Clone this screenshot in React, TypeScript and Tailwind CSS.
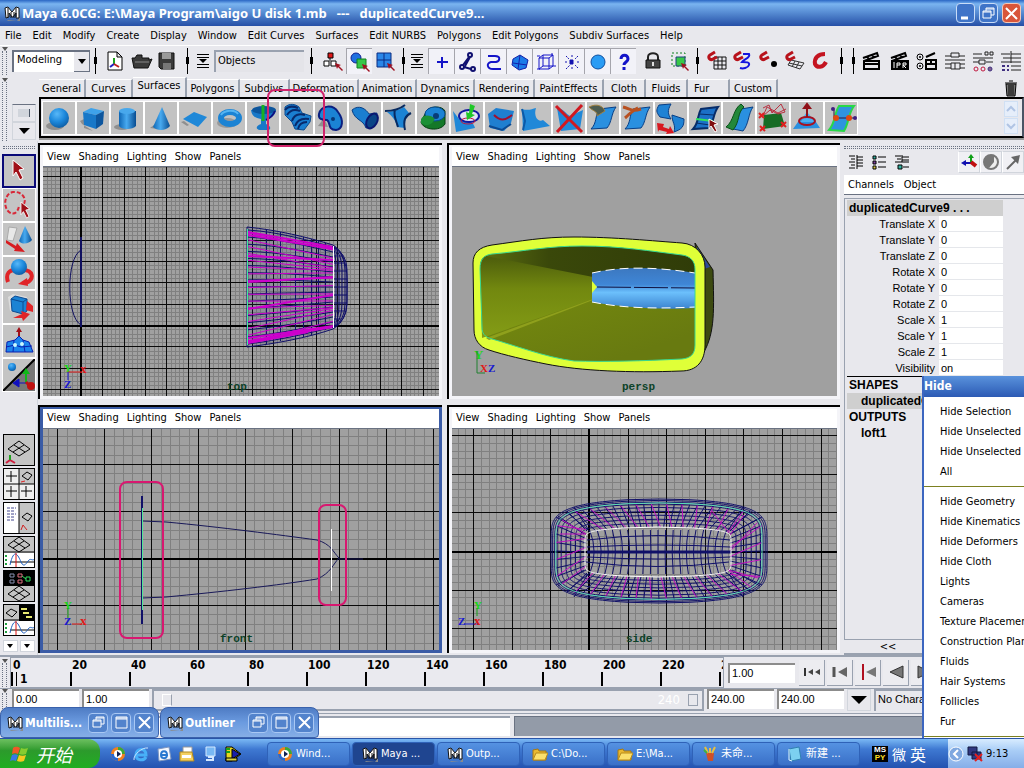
import { Fragment, useState } from 'react';
import type { ReactNode } from 'react';

type Pt = [number, number];

const menus = ['File', 'Edit', 'Modify', 'Create', 'Display', 'Window', 'Edit Curves', 'Surfaces', 'Edit NURBS', 'Polygons', 'Edit Polygons', 'Subdiv Surfaces', 'Help'];

const tabs = [
  { name: 'General', width: 'w-[47px]' },
  { name: 'Curves', width: 'w-[47px]' },
  { name: 'Surfaces', width: 'w-[54px]' },
  { name: 'Polygons', width: 'w-[53px]' },
  { name: 'Subdivs', width: 'w-[50px]' },
  { name: 'Deformation', width: 'w-[69px]' },
  { name: 'Animation', width: 'w-[58px]' },
  { name: 'Dynamics', width: 'w-[58px]' },
  { name: 'Rendering', width: 'w-[60px]' },
  { name: 'PaintEffects', width: 'w-[69px]' },
  { name: 'Cloth', width: 'w-[42px]' },
  { name: 'Fluids', width: 'w-[42px]' },
  { name: 'Fur', width: 'w-[42px] pl-1.5 text-left' },
  { name: 'Custom', width: 'w-[48px]' },
];

const channels = [
  ['Translate X', '0'], ['Translate Y', '0'], ['Translate Z', '0'],
  ['Rotate X', '0'], ['Rotate Y', '0'], ['Rotate Z', '0'],
  ['Scale X', '1'], ['Scale Y', '1'], ['Scale Z', '1'], ['Visibility', 'on'],
];

const hideTop = ['Hide Selection', 'Hide Unselected Objects', 'Hide Unselected CVs', 'All'];
const hideItems = ['Hide Geometry', 'Hide Kinematics', 'Hide Deformers', 'Hide Cloth', 'Lights', 'Cameras', 'Texture Placements', 'Construction Planes', 'Fluids', 'Hair Systems', 'Follicles', 'Fur'];

/* ---------- small pieces ---------- */

function Svg({ s = 24, children }: { s?: number; children: ReactNode }) {
  return (
    <svg width={s} height={s} viewBox={`0 0 ${s} ${s}`} fill="none" className="block shrink-0">
      {children}
    </svg>
  );
}

function MayaLogo() {
  return (
    <svg width="18" height="18" viewBox="0 0 18 18" className="block shrink-0">
      <path d="M4 16l10 1 3-4v4H5z" fill="#8b8b8b" />
      <path d="M2 4l3-1 4 5 4-5 3 1v10h-3V9l-3 4H9L6 9v4l-3 1z" fill="#fff" stroke="#111" strokeWidth="1" />
      <path d="M5 4v9M8 8v6M11 8v6M13 4v9" stroke="#111" strokeWidth="1" />
    </svg>
  );
}

function Sep({ wide = 'w-4' }: { wide?: string }) {
  return (
    <div className={`${wide} flex h-7 shrink-0 items-center justify-center`}>
      <svg width="6" height="26" className="block">
        <path d="M2 0h1v26H2z" fill="#000" />
        <path d="M1 9h3v7H1z" fill="#000" />
      </svg>
    </div>
  );
}

function Handle({ className = '' }: { className?: string }) {
  return (
    <div className={`flex w-[9px] shrink-0 flex-col items-center ${className}`}>
      <svg width="6" height="4" className="block shrink-0"><path d="M0 0h6L3 4z" fill="#555" /></svg>
      <div className="w-[5px] flex-1 border-x border-dotted border-gray-500" />
    </div>
  );
}

function ToolBtn({ label, on = false, children }: { label: string; on?: boolean; children: ReactNode }) {
  return (
    <button
      aria-label={label}
      className={`flex h-[26px] w-[26px] shrink-0 items-center justify-center ${on ? 'border-l border-t border-[#a5a5ac] bg-[#f2f2f8]' : ''}`}
    >
      {children}
    </button>
  );
}

const redArrow = <path d="M14 14l6 2-2 1 4 4-1 1-4-4-1 2z" fill="#a01020" />;
const magnet = <path d="M10 3L5 6c-3 2 0 6 3 4l4-2" stroke="#b8121b" strokeWidth="3" />;
const listIcon = (
  <Svg s={14}>
    <path d="M1 0h12v1H1zM1 3h12v1H1zM1 10h12v1H1zM1 13h12v1H1z" fill="#000" />
    <path d="M3 5h8L7 9z" fill="#000" />
  </Svg>
);

const maskIcons: [string, ReactNode][] = [
  ['Select handles', <path d="M12 7v11M7 12h11" stroke="#1414c8" strokeWidth="2" />],
  ['Select joints', <g stroke="#101070" strokeWidth="2"><circle cx="14" cy="5" r="2" /><circle cx="6" cy="17" r="2" /><circle cx="17" cy="19" r="2" /><path d="M13 7l-6 8M8 17l7 2M14 7l-5 9" /></g>],
  ['Select curves', <path d="M6 6h7c6 0 5 5 1 6H9c-5 1-4 7 2 7h8" stroke="#1414c8" strokeWidth="2" />],
  ['Select surfaces', <g><path d="M5 9l7-4 8 5-2 8-7 2-7-5z" fill="#1c7be8" stroke="#1420a8" /><path d="M5 13l14 2M12 5l-2 14" stroke="#1420a8" /></g>],
  ['Select deformations', <g stroke="#1414c8"><path d="M5 8h10v11H5zM9 5h10v11H9z" /><path d="M3 6h3M18 3v3M3 19h3M19 16h3M5 8l4-3M15 8l4-3M5 19l4-3M15 19l4-3" /></g>],
  ['Select dynamics', <g stroke="#1414b0"><path d="M6 6l3 3M12 5v3M18 6l-3 3M6 19l4-4M18 18l-3-3M5 12h3M17 12h3M12 17v3" strokeDasharray="2 1" /><path d="M10 10h3v4h-3z" fill="#1414b0" /></g>],
  ['Select rendering', <circle cx="12" cy="12" r="7" fill="#2a9cf4" stroke="#0d4ea0" />],
  ['Select miscellaneous', <path d="M9 9c0-5 7-5 7 0 0 3-4 3-4 6M12 17v3" stroke="#1414c8" strokeWidth="3" />],
];

const snapIcons: [string, ReactNode][] = [
  ['Snap to grids', <g><path d="M9 8h12v12H9zM13 8v12M17 8v12M9 12h12M9 16h12" stroke="#111" />{magnet}</g>],
  ['Snap to curves', <g><path d="M12 5h6c2 4-5 5-7 8 4 0 8 0 7 3s-6 4-9 3" stroke="#1414e0" strokeWidth="2" />{magnet}</g>],
  ['Snap to points', <g>{magnet}<circle cx="17" cy="15" r="3" fill="#000" /></g>],
  ['Snap to view planes', <g><path d="M8 11l13 3-4 6-12-4zM12 12l-3 6M16 13l-3 6M6 14l13 3" stroke="#333" />{magnet}</g>],
  ['Make live', <path d="M16 5c-7 0-11 4-10 10 2 4 8 4 11-2" stroke="#c41420" strokeWidth="4" />],
];

const clapper = <path d="M4 9l14-5 1 3L5 12v8h15v-8H5M6 15h14M8 8l2 2M13 6l2 2" stroke="#000" strokeWidth="2" />;

const boxIcons = (
  <>
    <ToolBtn label="Attribute editor">
      <Svg><path d="M2 7h6M8 4h8v4H8zM16 7h6M2 11h20M2 15h6M8 14h9v6H8zM17 15h5M2 19h6M17 19h5M12 14v6" stroke="#222" /></Svg>
    </ToolBtn>
    <ToolBtn label="Tool settings">
      <Svg><path d="M2 5h9M14 3h3v3h-3zM19 3h3v3h-3zM2 9h20M2 13h6M8 11h6v4H8zM15 13h7" stroke="#222" /><g stroke="#c01840"><circle cx="5" cy="20" r="2" /><circle cx="12" cy="20" r="2" /></g><circle cx="19" cy="20" r="2" stroke="#403080" fill="#806090" /></Svg>
    </ToolBtn>
    <ToolBtn label="Channel box">
      <Svg><path d="M2 5h9M12 2v12M12 5h10M4 9h8M12 9h10M2 13h20M12 17h10M12 21h10" stroke="#222" /><path d="M3 16h3v2H3zM8 16h2v2H8zM3 20h3v2H3zM8 20h2v2H8z" fill="#403080" /></Svg>
    </ToolBtn>
  </>
);

/* ---------- shelf icons, 32x32 ---------- */

const sheet = 'M4 27c6-6 4-13 8-20l17-2c-5 7-4 15-9 21z';

const shelf: [string, ReactNode][] = [
  ['Sphere', <g><ellipse cx="12" cy="24" rx="9" ry="4" fill="#8f8f8f" /><circle cx="16" cy="16" r="10" fill="url(#ball)" /></g>],
  ['Cube', <g><path d="M5 22l-2-3 4-2v9l9 3z" fill="#8f8f8f" /><path d="M6 10l8-4 13 3-8 4z" fill="#3ea2ea" /><path d="M6 10l13 3v14L7 23z" fill="#1878c8" /><path d="M19 13l8-4-1 13-7 5z" fill="#0d569e" /></g>],
  ['Cylinder', <g><ellipse cx="11" cy="25" rx="8" ry="3" fill="#8f8f8f" /><path d="M8 9v15c2 4 14 4 17 0V9z" fill="url(#tube)" /><ellipse cx="16" cy="9" rx="8" ry="3" fill="#48a8ec" /></g>],
  ['Cone', <g><path d="M5 26l8-6v7z" fill="#8f8f8f" /><path d="M17 5L8 25c4 4 13 4 17-1z" fill="url(#tube)" /></g>],
  ['Plane', <g><path d="M5 19l5 4-2 1-6-4z" fill="#8f8f8f" /><path d="M4 17l11-7 13 5-9 10z" fill="#1f88d8" /></g>],
  ['Torus', <g><ellipse cx="14" cy="21" rx="10" ry="5" fill="#999" /><ellipse cx="17" cy="16" rx="9" ry="6" stroke="#1b83d4" strokeWidth="6" /><path d="M8 13c3-5 14-6 17-1" stroke="#55b4f2" strokeWidth="2" /></g>],
  ['Revolve', <g><path d="M4 8c1 7 5 8 10 9v5c-5 2-6 5-1 6h9c3-2 0-5-3-6v-5c5-1 9-3 10-9z" fill="#1878c8" /><ellipse cx="17" cy="8" rx="12" ry="4" fill="#0d559c" /><path d="M16 3v16" stroke="#18b020" strokeWidth="3" /><path d="M28 9c-2 5-5 7-9 9" stroke="#101080" strokeWidth="2" /></g>],
  ['Loft', <g><path d="M4 5c5-4 10-3 14 0l3 6 9 3-1 6-6 8-9-1-3-7-7-7z" fill="#1a7ed0" stroke="#0b4b90" /><path d="M4 8c3-4 8-4 13-2M6 13c3-5 8-6 13-4M11 19c2-6 7-8 13-6M14 24c2-6 7-8 14-7M17 27c1-5 5-7 9-7" stroke="#082a6c" strokeWidth="2" /></g>],
  ['Planar', <g><path d="M3 24l6-8 4 9z" fill="#8f8f8f" /><path d="M4 12C6 3 18 2 23 10c6 8 5 17-2 18-9 0-5-8-9-10-5 0-9-1-8-6z" fill="#1b83d4" stroke="#0a1f80" strokeWidth="2" /><circle cx="18" cy="17" r="2" fill="#083878" /></g>],
  ['Extrude', <g><path d="M3 8c7-6 14-1 17 4l8-1c0 11-4 15-11 15-3-9-11-7-14-18z" fill="#1a7ed0" stroke="#083f86" /><ellipse cx="23" cy="19" rx="5" ry="8" transform="rotate(30 23 19)" fill="#0a4486" stroke="#0a1870" strokeWidth="2" /></g>],
  ['Birail', <g><path d="M4 10c7-1 12-2 17-5l5 6c-4 5-4 9-4 15l-8-1c-1-7-5-11-10-15z" fill="#1b83d4" /><path d="M2 9c9 0 15-2 20-6M22 28c-2-10 0-14 6-17M12 8c-2 5 1 10 3 17" stroke="#082a60" strokeWidth="2" /></g>],
  ['Boundary', <g><path d="M4 20c2 8 19 10 24 2V9c-3-6-17-5-19 1z" fill="#147828" stroke="#053c10" /><ellipse cx="18" cy="12" rx="10" ry="7" fill="#1b83d4" stroke="#094a90" /><path d="M4 17c4-6 10-3 14-1-2 7-9 9-14 5z" fill="#1b9035" /><circle cx="19" cy="14" r="3" fill="#083c78" /></g>],
  ['Project curve', <g><path d="M2 9l6 8c8 0 15 3 16 9L5 30z" fill="#1f88d8" /><ellipse cx="18" cy="14" rx="10" ry="6" stroke="#1018a0" strokeWidth="2" fill="#e4e4f4" /><ellipse cx="17" cy="19" rx="7" ry="3" stroke="#c01840" /><path d="M19 2l5 2-3 8 3 1-8 5-1-8 3 1z" fill="#20c828" /></g>],
  ['Trim', <g><path d="M3 12l8-6 18 3-3 12-7 8-14-3z" fill="#1f7fd0" /><path d="M9 13c6 6 11 6 18 0" stroke="#a01030" strokeWidth="2" /><path d="M4 24l13 4 9-6" stroke="#0b4a92" strokeWidth="2" /></g>],
  ['Untrim', <g><path d="M3 7c6 2 10 0 14-1-3 9 3 15 7 12l7 6-16 3-11 2z" fill="#2088d8" /><path d="M3 7l3 12-2 9" stroke="#0b5aa8" strokeWidth="2" /></g>],
  ['Remove trim', <g><path d="M4 6c6 0 9 6 13 8l13-6-3 19-19 2z" fill="#2088d8" /><path d="M3 4l26 26M29 3L4 30" stroke="#d01820" strokeWidth="3" /></g>],
  ['Fillet', <g><path d={sheet} fill="#2a90e0" stroke="#083f86" /><path d="M2 5c8-4 14-1 16 4l-8 5c1-5-5-5-8-9z" fill="#4c5b50" stroke="#a08040" /></g>],
  ['Detach surfaces', <g><path d={sheet} fill="#2a90e0" stroke="#083f86" /><path d="M2 5c8 2 9 5 18 2M4 16c5-4 6-7 13-10" stroke="#b85020" strokeWidth="3" /></g>],
  ['Attach surfaces', <g><path d="M4 3l12-1c-4 7-3 10 0 15L5 15C1 10 1 8 4 3z" fill="#1f82d4" stroke="#083f86" /><path d="M17 13l12 4c0 8-2 10-10 13 2-8-2-9-2-17z" fill="#1f82d4" stroke="#083f86" /><path d="M2 21l7 1-1 3 6 2 1-3 4 7-8 1 1-2-8-2-1 2z" fill="#d81820" /></g>],
  ['Insert isoparms', <g><path d={sheet} fill="#1b70c8" stroke="#082c68" strokeWidth="2" /><path d="M10 12l15 1M7 21l14 2" stroke="#082c68" /><path d="M7 17l17 2" stroke="#30e060" strokeWidth="2" /><path d="M20 17l9 5-4 1 3 6-2 1-4-6-2 3z" fill="#801010" stroke="#fff" /></g>],
  ['Extend surface', <g><path d="M10 27c5-8 3-13 8-20l12-2c-5 7-4 17-10 24z" fill="#2a90e0" stroke="#083f86" /><path d="M3 25c8-6 7-18 15-23l3 3c-7 6-4 15-11 23z" fill="#23883a" stroke="#0b5018" /></g>],
  ['Sculpt surface', <g><path d="M7 13l17-2 4 13-22 3z" fill="#166c24" /><path d="M6 6l6-3 3 8 9-9 4 8-7 2-8-4-7 6 4-9 11 6 8-4" stroke="#b83040" /><path d="M2 11l5 5m0-5l-5 5M3 24l5 5m0-5l-5 5M24 20l5 5m0-5l-5 5" stroke="#e02020" strokeWidth="2" /></g>],
  ['Surface editing', <g><path d="M2 27l7-10h14l6 9z" fill="#2a90e0" /><path d="M9 20c4-2 4-9 7-9s4 6 8 9z" fill="#4bb0f2" /><ellipse cx="16" cy="19" rx="8" ry="4" stroke="#a81020" strokeWidth="2" /><path d="M16 15V4M13 6l3-4 3 4z" stroke="#901018" fill="#901018" strokeWidth="2" /></g>],
  ['Stitch', <g><path d="M4 28c7-8 5-17 10-24h15c-6 8-5 17-10 25z" fill="#2f93df" stroke="#28d848" strokeWidth="2" /><path d="M9 16h20M9 16V8" stroke="#301040" /><circle cx="11" cy="16" r="3" fill="#e04810" /><circle cx="24" cy="16" r="3" fill="#e04810" /><circle cx="8" cy="7" r="2" fill="#402080" /><circle cx="30" cy="16" r="2" fill="#402080" /></g>],
];

/* ---------- tool box icons ---------- */

const cursor = 'M10 5l11 9-5 1 4 8-3 2-4-8-3 4z';

const tools: [string, ReactNode][] = [
  ['Select tool', <path d={cursor} fill="#a01018" stroke="#fff" />],
  ['Lasso tool', <g><path d="M21 15c3-6-3-13-11-12C1 5 0 18 6 23c5 4 9 0 10-6" stroke="#d82838" strokeWidth="2" strokeDasharray="4 2" /><path d={cursor} transform="translate(10 9) scale(0.8)" fill="#a01018" stroke="#fff" /></g>],
  ['Move tool', <g><path d="M6 4l8 1-4 13-6-1z" fill="#e8e8e8" stroke="#aaa" /><path d="M22 3l-6 15c3 4 10 3 13-1z" fill="url(#tube)" /><path d="M3 17l10 6 1-3 8 9-11-1 1-2-9-6z" fill="#d81c20" /></g>],
  ['Rotate tool', <g><path d="M5 25c-3-9 2-12 7-12M20 13c10 0 12 9 3 13" stroke="#e02428" strokeWidth="4" /><path d="M15 27l9-6 1 8z" fill="#e02428" /><circle cx="16" cy="10" r="8" fill="url(#ball)" /></g>],
  ['Scale tool', <g><path d="M5 6l5-3 14 3v15L7 20z" fill="#dcdcdc" /><path d="M8 8l4-3 12 3v12l-4 3-11-3z" fill="#1b83d4" stroke="#0b4a92" /><path d="M8 8l12 3 4-3M20 11v12" stroke="#0b4a92" /><path d="M24 10l6 5v6l-7-2M10 27l9-4-1-3 9 3-7 7-1-3z" fill="#e02428" /></g>],
  ['Soft modification', <g><path d="M16 2l3 5h-2v6h-2V7h-2z" fill="#a01018" /><path d="M4 17l8-2 4-4 4 4 6 2 4 10H3z" fill="#1c84ec" stroke="#0820b0" /><path d="M3 22l9-2 6 2 11-1M11 15l-1 12M20 15l2 12" stroke="#0820b0" /><circle cx="12" cy="20" r="2" fill="#c8f8ff" /><circle cx="19" cy="19" r="2" fill="#c8f8ff" /></g>],
  ['Show manipulator', <g><path d="M32 0v32H0z" fill="#777" /><path d="M0 32L32 0" stroke="#000" strokeWidth="2" /><circle cx="9" cy="8" r="4" fill="url(#ball)" /><path d="M23 24V14" stroke="#10b818" strokeWidth="2" /><path d="M19 15l4-6 4 6z" fill="#10b818" /><path d="M23 24H15M16 20v8l-6-4z" stroke="#1010c0" fill="#1010c0" /><path d="M23 23l4 4" stroke="#c01010" strokeWidth="3" /><circle cx="28" cy="27" r="4" fill="#c01010" /></g>],
];

const gridShape = 'M4 14l11-8 11 8-11 7zM10 10l11 7M20 10L9 17';
const graph = <g><path d="M0 16h32v16H0z" fill="#fff" /><path d="M6 25h26M0 15h32" stroke="#000" /><path d="M6 28c4-18 8-10 11-3s6 0 8-2 4 2 6-2" stroke="#2060c0" /><path d="M12 16v16" stroke="#e01010" /><path d="M2 18v12" stroke="#20a040" strokeDasharray="2 2" strokeWidth="2" /></g>;

const layouts: [string, ReactNode][] = [
  ['Single perspective view', <g><path d={gridShape} stroke="#000" /><path d="M6 25l-4 3M6 25l5 3" stroke="#d02040" strokeWidth="2" /><path d="M6 20v5" stroke="#20a020" strokeWidth="2" /></g>],
  ['Four view', <g><path d="M0 0h15v30H0zM15 15h15v15H15z" fill="#efefef" /><path d="M15 0v30M0 15h30M2 7h11M7 2v11M2 22h11M7 17v11M17 22h11M22 17v11" stroke="#000" /><path d="M18 7l5-4 5 3-4 5z" stroke="#000" /><path d="M17 13l4-1" stroke="#e02020" /></g>],
  ['Outliner and perspective', <g><path d="M0 0h15v30H0z" fill="#fff" /><path d="M15 0v30" stroke="#000" /><path d="M3 5h9M3 8h7M3 11h9M3 14h7M3 17h8" stroke="#444890" strokeDasharray="3 1" /><path d="M18 14l5-4 5 3-4 5z" stroke="#000" /><path d="M17 27l2-5 4 5" stroke="#d02020" /></g>],
  ['Perspective and graph', <g><path d={gridShape} transform="translate(0 -6)" stroke="#000" />{graph}</g>],
  ['Hypershade and perspective', <g><path d="M0 0h32v15H0z" fill="#000" /><path d="M6 3h4v3H6zM6 9h4v3H6z" stroke="#8890b0" /><path d="M14 3h4v3h-4zM14 9h4v3h-4z" stroke="#e07080" /><path d="M18 5l4 3M22 6h4v4h-4z" stroke="#30e060" /><path d={gridShape} transform="translate(0 9)" stroke="#000" /></g>],
  ['Perspective, hypergraph and graph', <g><path d="M15 0h16v16H15z" fill="#000" /><path d="M17 4h6M19 8h6M22 12h6" stroke="#e8e870" strokeWidth="2" /><path d="M2 8l5-4 6 3-5 5z" stroke="#000" />{graph}</g>],
];

/* ---------- viewport drawing ---------- */

interface GridProps {
  ox: number;
  oy: number;
  pitch: number;
  x0: number;
  y0: number;
  w?: number;
  h?: number;
}

// ox/oy is where the two world axes cross
function Grid({ ox, oy, pitch, x0, y0, w = 1400, h = 900 }: GridProps) {
  const step = pitch / 5;
  let minor = '';
  let major = '';
  for (let i = Math.ceil((x0 - ox) / step); ox + i * step < x0 + w; i++) {
    const seg = `M${Math.round(ox + i * step)}.5 ${y0}v${h}`;
    if (i % 5 === 0) major += seg;
    else minor += seg;
  }
  for (let i = Math.ceil((y0 - oy) / step); oy + i * step < y0 + h; i++) {
    const seg = `M${x0} ${Math.round(oy + i * step)}.5h${w}`;
    if (i % 5 === 0) major += seg;
    else minor += seg;
  }
  return (
    <g shapeRendering="crispEdges">
      <path d={minor} stroke="#808080" />
      <path d={major} stroke="#0a0a0a" />
    </g>
  );
}

function Label({ x, y, children }: { x: number; y: number; children: string }) {
  return <text x={x} y={y} className="fill-[#0c4228] font-['Liberation_Mono',monospace] text-[11px] font-bold">{children}</text>;
}

function Axis({ x, y, size = 11, fill, children }: { x: number; y: number; size?: number; fill: string; children: string }) {
  return <text x={x} y={y} fontSize={size} fill={fill} className="font-['Liberation_Serif',serif] font-bold">{children}</text>;
}

function TopView() {
  const rows = Array.from({ length: 17 }, (_, i) => i / 16);
  return (
    <g transform="translate(-43 -166)">
      <Grid ox={81} oy={324} pitch={21.35} x0={43} y0={166} />
      <path d="M81 166v700M43 325h1400" stroke="#000" strokeWidth="2" />
      <path d="M81 236v90" stroke="#101060" strokeWidth="2" />
      <path d="M81 249c-15 8-15 67 0 75" stroke="#101060" />
      <path d="M247 226c30 3 60 10 86 18 17 10 14 40 14 50s0 26-14 34c-26 9-60 15-86 18z" fill="#34347a" fillOpacity="0.15" stroke="#101068" />
      {rows.map((r) => (
        <path key={r} d={`M248 ${229 + r * 114}C280 ${231 + r * 108} 310 ${240 + r * 92} 333 ${246 + r * 80}`} stroke="#101068" />
      ))}
      <g stroke="#101068" shapeRendering="crispEdges">
        <path d="M266.5 229v114M280.5 231v109M295.5 234v103M311.5 238v96M325.5 242v87M303.5 236v100M318.5 240v90" />
      </g>
      {rows.map((r) => (
        <path key={r} d={`M248 ${232 + r * 109}L333 ${249 + r * 74 + 5 * Math.sin(r * 12)}`} stroke="#cc00cc" />
      ))}
      <path d="M248 231l85 15M248 234l85 14M248 340l85-14M248 337l85-12M248 342l60-11M248 255l85 4M248 281l85-5M248 308l85-14" stroke="#cc00cc" strokeWidth="2" />
      {[3, 6, 9, 12, 14].map((d) => (
        <path key={d} d={`M333 245q${d} 8 ${d} 24v34q0 16-${d} 24`} stroke="#101068" />
      ))}
      <path d="M334 255h9M334 262h11M334 270h13M334 278h13M334 286h13M334 294h13M334 302h13M334 310h11M334 318h7" stroke="#101068" />
      <path d="M247.5 228v116" stroke="#40e8a0" />
      <path d="M333.5 245v82" stroke="#fff" />
      <Axis x={64} y={371} fill="#18d818">Y</Axis>
      <path d="M68 371h14" stroke="#e01818" /><path d="M68 371v8" stroke="#1818d0" />
      <Axis x={80} y={372} size={13} fill="#e01818">x</Axis>
      <Axis x={64} y={387} fill="#1818d0">Z</Axis>
      <Label x={227} y={389}>top</Label>
    </g>
  );
}

function PerspView() {
  return (
    <g transform="translate(-452 -166)">
      <path d="M695 242l18 27c1 40 2 62-9 82z" fill="#3c4a10" stroke="#111" />
      <path d="M697 246l13 20-6 2-6-10z" fill="#2c4a9a" />
      <path d="M473 262c0-10 6-16 19-18 30-4 50-8 82-8 40 0 80 4 108 6 14 1 23 12 23 24v78c0 16-8 26-24 26-50 2-100 0-135-7-20-4-42-9-57-14-10-3-15-11-15-20z" fill="#dfff38" stroke="#101010" />
      <path d="M480 266c0-8 4-12 12-13 34-3 56-8 90-8 38 0 68 5 100 9 8 1 13 6 13 14v76c0 9-4 13-13 14-40 2-78 3-108 2-30-4-60-16-82-22-8-2-10-6-10-12z" fill="url(#olive)" />
      <path d="M486 255c40-5 62-10 96-10 38 0 68 5 100 9 8 1 13 6 13 14v6c-30-3-68-4-102 5z" fill="url(#shade)" />
      <path d="M480 268c0-8 2-12 6-13l107 21v22L482 337z" fill="url(#wall)" />
      <path d="M486 337l107-39v1L489 339z" fill="#8fa01c" />
      <path d="M592 272c30-7 65-6 103 0v35c-38 2-73-1-103-6z" fill="url(#blueTop)" />
      <path d="M592 280l5 6-5 6z" fill="#dfff38" />
      <path d="M592 272c30-7 65-6 103 0M592 301c30 6 60 7 103 5" stroke="#fff" strokeDasharray="9 5" />
      <path d="M597 286l98 1" stroke="#101040" strokeDasharray="34 3" />
      <path d="M480 268c0-10 4-14 12-15 34-3 56-8 90-8 38 0 68 5 100 9 8 1 13 6 13 14v76c0 9-4 13-13 14-40 2-78 3-108 2-30-4-60-16-82-22-8-2-10-6-10-12z" stroke="#38d890" />
      <Axis x={474} y={358} size={13} fill="#18d818">Y</Axis>
      <path d="M477 350v22h8" stroke="#208030" />
      <Axis x={480} y={371} fill="#e01818">X</Axis>
      <Axis x={488} y={371} fill="#1818d0">Z</Axis>
      <Label x={622} y={389}>persp</Label>
    </g>
  );
}

function FrontView() {
  return (
    <g transform="translate(-43 -429)">
      <Grid ox={339} oy={558} pitch={46.95} x0={43} y0={429} />
      <path d="M43 559h1400" stroke="#000" strokeWidth="2" />
      <path d="M142 521l24 1C220 527 280 535 317 540c14 4 16 12 22 18-6 6-8 15-22 21-37 6-97 13-151 18l-24 1M339 559h24" stroke="#181858" />
      <path d="M142 496v128" stroke="#101068" strokeWidth="2" />
      <path d="M142.5 508v102" stroke="#50e898" />
      <path d="M331.5 529v62" stroke="#fff" />
      <rect x="120" y="482" width="43" height="156" rx="7" stroke="#d81870" strokeWidth="2" />
      <rect x="319" y="505" width="27" height="100" rx="7" stroke="#d81870" strokeWidth="2" />
      <Axis x={64} y={609} fill="#18d818">Y</Axis>
      <path d="M68 608v10" stroke="#18a018" /><path d="M72 624h10" stroke="#e01818" />
      <Axis x={64} y={625} fill="#1818d0">Z</Axis>
      <Axis x={80} y={625} size={13} fill="#e01818">x</Axis>
      <Label x={220} y={642}>front</Label>
    </g>
  );
}

const outer = { cx: 659, cy: 551, a: 108, b: 52 };
const inner = { cx: 658, cy: 552, a: 73, b: 25 };

// rounded box that bulges a little in the middle of its long sides
function ringPoint(t: number, k: number): Pt {
  const a = outer.a + (inner.a - outer.a) * k;
  const b = outer.b + (inner.b - outer.b) * k;
  const cx = outer.cx + (inner.cx - outer.cx) * k;
  const cy = outer.cy + (inner.cy - outer.cy) * k;
  const c = Math.cos(t);
  const s = Math.sin(t);
  const power = 0.35 - 0.15 * k;
  const x = Math.sign(c) * Math.pow(Math.abs(c), power);
  const y = Math.sign(s) * Math.pow(Math.abs(s), power) * (1 - 0.18 * x * x);
  return [cx + a * x, cy + b * y];
}

function ring(k: number) {
  const pts = Array.from({ length: 241 }, (_, i) => ringPoint((i / 240) * Math.PI * 2, k));
  return pts.map((p) => p.map((n) => n.toFixed(1)).join(',')).join(' ');
}

// spoke from ring k1 to the inner ring, at fraction u along one side of the box
function sideSpoke(side: 'top' | 'bottom' | 'left' | 'right', u: number, lean: number) {
  const v = u * 2 - 1;
  const w = v + lean;
  const bulge = (n: number) => 1 - 0.18 * n * n;
  if (side === 'top') return `M${659 + v * 92} ${551 - 47 * bulge(v)}L${658 + w * 68} ${552 - 25 * bulge(w)}`;
  if (side === 'bottom') return `M${659 + v * 92} ${551 + 49 * bulge(v)}L${658 + w * 68} ${552 + 25 * bulge(w)}`;
  if (side === 'left') return `M556 ${551 + v * 34}L586 ${552 + w * 18}`;
  return `M762 ${551 + v * 34}L730 ${552 + w * 18}`;
}

function SideView() {
  const cols = Array.from({ length: 19 }, (_, i) => i - 9);
  const long = Array.from({ length: 25 }, (_, i) => i / 24);
  const short = Array.from({ length: 9 }, (_, i) => i / 8);
  return (
    <g transform="translate(-452 -429)">
      <Grid ox={589} oy={551} pitch={38.6} x0={452} y0={429} />
      <path d="M589 429v900M452 552h1400" stroke="#000" strokeWidth="2" />
      {[0, 0.05, 0.11, 0.18, 0.3, 0.44, 0.58, 0.72, 0.86].map((k) => <polyline key={k} points={ring(k)} stroke="#101068" />)}
      <g stroke="#101068">
        {long.map((u) => <path key={u} d={sideSpoke('top', u, 0) + sideSpoke('bottom', u, 0)} />)}
        {short.map((u) => <path key={u} d={sideSpoke('left', u, 0) + sideSpoke('right', u, 0)} />)}
        <path d="M567 511l20 20M558 516l26 18M574 507l14 22M750 511l-20 20M760 518l-28 15M743 507l-14 22M567 592l20-19M558 586l26-16M574 597l14-23M750 592l-20-19M760 586l-28-16M743 597l-14-23" />
      </g>
      <g stroke="#c010c0">
        {long.filter((_, i) => i % 2 === 1).map((u) => <path key={u} d={sideSpoke('top', u, 0.12) + sideSpoke('bottom', u, -0.04)} />)}
        {short.filter((_, i) => i % 2 === 1).map((u) => <path key={u} d={sideSpoke('left', u, -0.5) + sideSpoke('right', u, 0.5)} />)}
        <path d="M560 534l26 0M562 520l24 14M562 584l24-18M758 578l-30-8M752 588l-24-18M712 511l17 22M744 515l-14 20M757 523l-27 28" />
      </g>
      {cols.map((c) => (
        <path key={c} d={`M${658 + c * 7.6} 530Q${658 + c * 6.6} 552 ${658 + c * 7.6} 574`} stroke="#101068" />
      ))}
      <path d="M587 540q71-9 143 0M586 562q71 9 143 0M587 547q71-4 143 0M587 557q71 4 143 0" stroke="#101068" />
      <path d="M587 552h144" stroke="#101068" strokeWidth="3" />
      <polyline points={ring(0.14)} stroke="#58e0b8" />
      <polyline points={ring(1)} stroke="#fff" />
      <Axis x={474} y={609} fill="#18d818">Y</Axis>
      <path d="M477 608v8" stroke="#18a018" /><path d="M464 624h14" stroke="#1818d0" />
      <Axis x={458} y={625} fill="#1818d0">Z</Axis>
      <Axis x={474} y={625} size={13} fill="#e01818">x</Axis>
      <Label x={626} y={642}>side</Label>
    </g>
  );
}

function Viewport({ title, active = false, children }: { title: string; active?: boolean; children: ReactNode }) {
  return (
    <section
      aria-label={title}
      className={`flex min-h-0 min-w-0 flex-col border-l-2 border-t-2 border-black ${active ? 'bg-[#3a5ba6]' : 'bg-[#f4f4f8]'} pb-[3px] pl-[3px] pr-[3px] pt-0.5`}
    >
      <nav className="flex h-[19px] shrink-0 items-center gap-2 bg-white pl-1">
        {['View', 'Shading', 'Lighting', 'Show', 'Panels'].map((m) => <button key={m}>{m}</button>)}
      </nav>
      <div className="min-h-0 flex-1 overflow-hidden border-t border-gray-500 bg-[#a0a0a0]">
        <svg className="block h-full w-full" fill="none">{children}</svg>
      </div>
    </section>
  );
}

/* ---------- bottom pieces ---------- */

function NumBox({ label, value }: { label: string; value: string }) {
  return (
    <input
      aria-label={label}
      defaultValue={value}
      className="h-5 w-[67px] shrink-0 border-l-2 border-t-2 border-[#8c8c8c] bg-white pb-0.5 pl-0.5 font-['Liberation_Sans',sans-serif] text-[11px]"
    />
  );
}

function PlayBtn({ label, children }: { label: string; children: ReactNode }) {
  return (
    <button aria-label={label} className="flex h-[26px] w-[26px] shrink-0 items-center justify-center border-b border-r border-gray-400 bg-[#ececf0]">
      <Svg s={20}>{children}</Svg>
    </button>
  );
}

const restore = <path d="M6 6V3h8v7h-3M3 6h8v7H3zM3 7h8M6 4h8" stroke="#fff" />;
const maximize = <path d="M3 3h11v11H3zM3 4h11M3 5h11" stroke="#fff" />;
const cross = <path d="M3 3l11 11M14 3L3 14" stroke="#fff" strokeWidth="2" />;

function MiniWindow({ title }: { title: string }) {
  return (
    <div className="flex h-[31px] w-[159px] items-center rounded-t-lg rounded-b border border-[#3a62ac] bg-linear-to-b from-[#4f7cc4] via-[#6b9be0] to-[#86aee6] pl-[5px] pr-1">
      <MayaLogo />
      <span className="min-w-0 flex-1 whitespace-nowrap pl-px text-xs font-bold text-white">{title}</span>
      <div className="flex gap-[3px]">
        {([['Restore', restore], ['Maximize', maximize], ['Close', cross]] as [string, ReactNode][]).map(([name, art]) => (
          <button key={name} aria-label={`${name} ${title}`} className="flex h-5 w-5 items-center justify-center rounded-sm border border-[#a9c8f4] bg-[#5283cc]">
            <Svg s={17}>{art}</Svg>
          </button>
        ))}
      </div>
    </div>
  );
}

const wmp = <g><circle cx="8" cy="8" r="7" fill="#f08020" /><path d="M8 1a7 7 0 0 1 7 7H8z" fill="#38a838" /><path d="M1 8a7 7 0 0 0 7 7V8z" fill="#2868d0" /><circle cx="8" cy="8" r="4" fill="#fff" /><path d="M7 5l4 3-4 3z" fill="#102050" /></g>;
const folder = <g><path d="M1 4l5-1 1 2h7v9H1z" fill="#e8b830" stroke="#a87810" /><path d="M4 7h12l-3 7H1z" fill="#fbe06c" stroke="#b88a18" /></g>;

const quick: [string, ReactNode][] = [
  ['Media Player', wmp],
  ['Internet Explorer', <g><path d="M3 9h10c0-8-10-7-10 0 0 6 8 6 10 2" stroke="#48b0f8" strokeWidth="3" /><path d="M1 14C0 9 9 1 15 2" stroke="#c8e4ff" /></g>],
  ['Outlook Express', <g><path d="M2 3l11-2 2 12-12 2z" fill="#f4f8ff" stroke="#8098c0" /><path d="M5 9h6c0-5-6-5-6 0 0 4 5 4 6 1" stroke="#2878d0" strokeWidth="2" /></g>],
  ['Documents', <g><path d="M4 1h9v9H4z" fill="#fff" stroke="#999" /><path d="M1 6h12l2 9H1z" fill="#f4d060" stroke="#b08820" /><path d="M3 9h9v3H3z" fill="#fff" /></g>],
  ['My Computer', <g><path d="M4 1h9v9H4z" fill="#78b8f4" stroke="#d4e8ff" /><path d="M6 11h5v3H4" stroke="#d4e8ff" strokeWidth="2" /></g>],
  ['Player', <g><path d="M1 1h6l9 7-9 7H1z" fill="#e8d820" stroke="#000" /><path d="M7 3l8 5-8 5z" fill="#1820a8" stroke="#000" /><path d="M1 12h11v3H1z" fill="#d8d040" stroke="#000" /><path d="M1 3h4M1 6h4" stroke="#18a018" strokeWidth="2" /></g>],
];

const tasks: [string, ReactNode][] = [
  ['Wind...', <Svg s={16}>{wmp}</Svg>],
  ['Maya ...', <MayaLogo />],
  ['Outp...', <MayaLogo />],
  ['C:\\Do...', <Svg s={16}>{folder}</Svg>],
  ['E:\\Ma...', <Svg s={16}>{folder}</Svg>],
  ['未命...', <Svg s={16}><path d="M4 7h8l-1 8H6z" fill="#d05028" /><path d="M6 7L3 1M8 7V2M10 7l3-6" stroke="#e8c040" strokeWidth="2" /><path d="M5 7L2 4" stroke="#40b040" strokeWidth="2" /></Svg>],
  ['新建 ...', <Svg s={16}><path d="M2 3l10-2 2 12-10 2z" fill="#7cd0f0" stroke="#3080b0" /><path d="M2 3v11l3 1" stroke="#e0f8ff" /></Svg>],
];

/* ---------- app ---------- */

export default function App() {
  const [tab, setTab] = useState('Surfaces');
  const [tool, setTool] = useState('Select tool');

  return (
    <div className="relative flex h-screen flex-col overflow-hidden bg-[#e8e8ed] font-['DejaVu_Sans_Condensed','Noto_Sans_CJK_SC',sans-serif] text-[11px] leading-4 whitespace-nowrap text-black">
      <svg width="0" height="0" className="absolute">
        <defs>
          <radialGradient id="ball" cx="0.4" cy="0.3" r="0.8"><stop offset="0" stopColor="#58b8f8" /><stop offset="0.5" stopColor="#1c88dc" /><stop offset="1" stopColor="#0a5498" /></radialGradient>
          <linearGradient id="tube"><stop offset="0" stopColor="#0e66b4" /><stop offset="0.45" stopColor="#48aaf0" /><stop offset="1" stopColor="#084c90" /></linearGradient>
          <linearGradient id="olive" x2="0.6" y2="1"><stop offset="0" stopColor="#5c6e10" /><stop offset="0.5" stopColor="#72860f" /><stop offset="1" stopColor="#687a10" /></linearGradient>
          <linearGradient id="shade" x2="1"><stop offset="0" stopColor="#5a6c10" /><stop offset="0.3" stopColor="#3a480a" /><stop offset="1" stopColor="#303c08" /></linearGradient>
          <linearGradient id="wall" x2="0" y2="1"><stop offset="0" stopColor="#4c5c0c" /><stop offset="0.4" stopColor="#72880f" /><stop offset="1" stopColor="#849c16" /></linearGradient>
          <linearGradient id="blueTop" x2="0" y2="1"><stop offset="0" stopColor="#3c78c0" /><stop offset="0.4" stopColor="#3f86d6" /><stop offset="0.6" stopColor="#6cc0fc" /><stop offset="1" stopColor="#3c84d0" /></linearGradient>
        </defs>
      </svg>

      {/* title bar */}
      <header className="flex h-[26px] shrink-0 items-center bg-linear-to-b from-[#2a66c4] via-[#7ab4f0] via-15% to-[#264fa6] pl-[3px] pr-[3px]">
        <MayaLogo />
        <h1 className="flex-1 pl-px font-['Noto_Sans',sans-serif] text-[13px] font-bold whitespace-pre text-white">Maya 6.0CG: E:\Maya Program\aigo U disk 1.mb   ---   duplicatedCurve9...</h1>
        <div className="flex gap-1">
          <button aria-label="Minimize" className="flex h-5 w-[19px] items-center justify-center rounded-sm border border-[#c8dcf8] bg-[#3f74c8]"><Svg s={17}><path d="M4 13h7" stroke="#fff" strokeWidth="3" /></Svg></button>
          <button aria-label="Restore" className="flex h-5 w-[19px] items-center justify-center rounded-sm border border-[#c8dcf8] bg-[#3f74c8]"><Svg s={17}>{restore}</Svg></button>
          <button aria-label="Close" className="flex h-5 w-[19px] items-center justify-center rounded-sm border border-[#f4c8b8] bg-[#d8553a]"><Svg s={17}>{cross}</Svg></button>
        </div>
      </header>

      <nav className="flex h-[19px] shrink-0 items-center gap-[11px] pl-[5px]">
        {menus.map((m) => <button key={m}>{m}</button>)}
      </nav>

      {/* status line */}
      <div className="flex h-[31px] shrink-0 items-center border-t border-white">
        <Handle className="h-7" />
        <div className="ml-[3px] flex h-[22px] w-[78px] shrink-0 border-l-2 border-t-2 border-gray-500 bg-white">
          <select aria-label="Menu set" className="min-w-0 flex-1 appearance-none pb-1 pl-[3px] outline-none">
            <option>Modeling</option>
          </select>
          <span className="pointer-events-none flex w-4 items-center justify-center border-b border-r border-gray-500 bg-[#e8e8ed]"><svg width="8" height="5"><path d="M0 0h8L4 5z" /></svg></span>
        </div>
        <Sep wide="w-3" />
        <ToolBtn label="New scene"><Svg><path d="M5 3h9l5 5v13H5zM14 3v5h5" fill="#fff" stroke="#000" /><path d="M11 9v6" stroke="#20a020" strokeWidth="2" /><path d="M11 15l-4 3" stroke="#2020c0" strokeWidth="2" /><path d="M11 15l5 3" stroke="#c02020" strokeWidth="2" /></Svg></ToolBtn>
        <ToolBtn label="Open scene"><Svg><path d="M3 9h3l2-3h5v3h7v2l3-1-4 9H5z" fill="#3a3a3a" stroke="#111" /><path d="M6 13h14" stroke="#888" /></Svg></ToolBtn>
        <ToolBtn label="Save scene"><Svg><path d="M4 4h15v16H6l-2-2z" fill="#3a3a3a" stroke="#111" /><path d="M7 4h9v6H7z" fill="#9a9a9a" /><path d="M8 14h8v6H8z" fill="#777" /></Svg></ToolBtn>
        <Sep />
        {listIcon}
        <input aria-label="Selection mask" defaultValue="Objects" className="ml-1 h-[22px] w-[90px] shrink-0 border-l-2 border-t-2 border-gray-400 bg-[#e4e4e9] pb-1 pl-0.5" />
        <Sep />
        <ToolBtn label="Select by hierarchy"><Svg><path d="M7 4h5v5H7z" fill="#e01818" stroke="#000" /><path d="M3 12h5v5H3zM10 12h5v5h-5zM9 9v3" fill="#fff" stroke="#000" />{redArrow}</Svg></ToolBtn>
        <ToolBtn label="Select by object" on><Svg><circle cx="8" cy="8" r="5" fill="#2070e0" stroke="#102090" /><path d="M9 9h9v9H9z" fill="#38c848" stroke="#108020" />{redArrow}</Svg></ToolBtn>
        <ToolBtn label="Select by component"><Svg><path d="M4 4h14v14H4z" fill="#2a86e8" /><path d="M4 4h14v14H4zM11 4v14M4 11h14" stroke="#0a2a80" />{redArrow}</Svg></ToolBtn>
        <Sep wide="w-3" />
        {listIcon}
        <div className="ml-1 flex">
          {maskIcons.map(([name, art]) => <ToolBtn key={name} label={name} on><Svg>{art}</Svg></ToolBtn>)}
        </div>
        <div className="ml-1 flex">
          <ToolBtn label="Lock selection"><Svg><path d="M7 11V8c0-5 10-5 10 0v3" stroke="#222" strokeWidth="2" /><path d="M5 11h14v8H5z" fill="#444" stroke="#111" /><path d="M12 13v4" stroke="#ddd" strokeWidth="2" /></Svg></ToolBtn>
          <ToolBtn label="Highlight selection"><Svg><path d="M5 4h13v13H5z" stroke="#108020" strokeDasharray="2 2" /><path d="M9 8h9v9H9z" fill="#38c848" stroke="#204080" />{redArrow}</Svg></ToolBtn>
        </div>
        <Sep wide="w-3" />
        {snapIcons.map(([name, art]) => <ToolBtn key={name} label={name}><Svg>{art}</Svg></ToolBtn>)}
        <Sep wide="w-4" />
        <Sep wide="w-2" />
        <div className="flex min-w-0 flex-1 justify-between overflow-hidden">
          <ToolBtn label="Render"><Svg>{clapper}</Svg></ToolBtn>
          <ToolBtn label="IPR render"><Svg><path d="M4 9l14-5 1 3L5 12M8 8l2 2M13 6l2 2" stroke="#000" strokeWidth="2" /><path d="M4 11h18v10H4z" fill="#000" /><path d="M7 13v6M10 19v-5h3v2h-3M16 19v-5h3v2h-3l3 3" stroke="#fff" /></Svg></ToolBtn>
          <ToolBtn label="Render globals"><Svg><circle cx="5" cy="8" r="3" stroke="#000" /><circle cx="5" cy="17" r="3" stroke="#000" /><circle cx="5" cy="8" r="1" fill="#000" /><circle cx="5" cy="17" r="1" fill="#000" /><path d="M11 8l9-4M11 11h10v9H11zM11 15h10M16 11v4" stroke="#000" strokeWidth="2" /></Svg></ToolBtn>
          {boxIcons}
        </div>
      </div>

      {/* shelf */}
      <div className="flex h-[65px] shrink-0">
        <Handle className="mt-0.5" />
        <div className="flex w-[30px] shrink-0 flex-col items-center pt-7">
          <button aria-label="Shelf tabs" className="flex h-[18px] w-6 items-center justify-center border border-gray-300 border-t-gray-500"><span className="h-2 w-3 border-r border-gray-600 bg-gray-300" /></button>
          <button aria-label="Shelf menu" className="flex h-[18px] w-6 items-center justify-center border border-gray-300"><svg width="11" height="6"><path d="M0 0h11L5 6z" /></svg></button>
        </div>
        <div className="flex min-w-0 flex-1 flex-col">
          <div className="flex h-[21px] items-end pr-1">
            <div role="tablist" className="flex flex-1 items-end">
              {tabs.map((t) => (
                <button
                  key={t.name}
                  role="tab"
                  aria-selected={tab === t.name}
                  onClick={() => setTab(t.name)}
                  className={`${t.width} border-r-2 border-t border-r-gray-400 border-t-white ${tab === t.name ? 'h-5 pb-1' : 'h-[18px]'}`}
                >
                  {t.name}
                </button>
              ))}
            </div>
            <button aria-label="Delete"><Svg s={18}><path d="M4 5h10l-1 12H5z" fill="#777" stroke="#000" /><path d="M3 4h12M7 2h4M7 6v10M9 6v10M11 6v10" stroke="#000" /></Svg></button>
          </div>
          <div className="flex h-[41px] items-center border-2 border-black border-r-gray-600 pl-0.5 shadow-[0_2px_0_#999]">
            <div className="flex flex-1 gap-0.5">
              {shelf.map(([name, art]) => (
                <button key={name} aria-label={name} className="shrink-0 bg-[#c2c2c2] outline-1 outline-white"><Svg s={32}>{art}</Svg></button>
              ))}
            </div>
            <div className="flex flex-col gap-px pr-1">
              <button aria-label="Scroll up" className="h-4 w-3.5 border border-[#d0e0f4] bg-[#e6eefa]"><svg width="12" height="12"><path d="M2 8l4-4 4 4" stroke="#b0c4e4" strokeWidth="2" fill="none" /></svg></button>
              <button aria-label="Scroll down" className="h-4 w-3.5 border border-[#d0e0f4] bg-[#e6eefa]"><svg width="12" height="12"><path d="M2 4l4 4 4-4" stroke="#b0c4e4" strokeWidth="2" fill="none" /></svg></button>
            </div>
          </div>
        </div>
      </div>

      <main className="flex min-h-0 flex-1">
        {/* tool box */}
        <aside className="flex w-[38px] shrink-0 flex-col items-center border-r border-gray-300">
          <div className="my-[5px] h-[3px] w-8 border-y border-dotted border-gray-500" />
          <div className="flex flex-col">
            {tools.map(([name, art]) => (
              <button
                key={name}
                aria-label={name}
                onClick={() => setTool(name)}
                className={`flex h-[34px] w-[34px] items-center justify-center overflow-hidden bg-[#c4c4c4] ${tool === name ? 'border-2 border-[#0a0a78]' : 'border border-white'}`}
              >
                <Svg s={32}>{art}</Svg>
              </button>
            ))}
          </div>
          <div className="flex-1" />
          <div className="flex flex-col gap-0.5">
            {layouts.map(([name, art]) => (
              <button key={name} aria-label={name} className="h-8 w-8 overflow-hidden border border-black bg-[#c4c4c4]"><Svg s={30}>{art}</Svg></button>
            ))}
          </div>
          <div className="flex gap-0.5 pb-[3px] pt-1">
            <button aria-label="Previous layouts" className="flex h-3 w-[15px] items-center justify-center border border-gray-300 bg-white"><svg width="6" height="4"><path d="M0 0h6L3 4z" /></svg></button>
            <button aria-label="Next layouts" className="flex h-3 w-[15px] items-center justify-center border border-gray-300 bg-white"><svg width="6" height="4"><path d="M0 0h6L3 4z" /></svg></button>
          </div>
        </aside>

        <div className="grid min-w-0 flex-1 grid-cols-[404fr_393fr] grid-rows-[257fr_249fr] gap-x-[5px] gap-y-[6px] pb-0.5 pt-0.5">
          <Viewport title="top"><TopView /></Viewport>
          <Viewport title="persp"><PerspView /></Viewport>
          <Viewport title="front" active><FrontView /></Viewport>
          <Viewport title="side"><SideView /></Viewport>
        </div>

        {/* channel box */}
        <aside className="ml-1 flex w-[180px] shrink-0 flex-col overflow-hidden">
          <div className="mt-[5px] h-[3px] shrink-0 border-y border-dotted border-gray-500" />
          <div className="flex h-[26px] shrink-0 items-center">
            <div className="flex flex-1 gap-[7px] pl-1">
              <Svg s={16}><path d="M1 2h6M3 5h4M1 8h6M3 11h4M1 14h6M9 1v14M9 3h6M9 6h6M9 9h6M9 12h6" stroke="#000" /></Svg>
              <Svg s={16}><path d="M7 3h8M7 8h8M7 13h8" stroke="#000" /><path d="M2 2h3v3H2z" fill="#30b0a0" stroke="#000" /><path d="M2 7h3v3H2z" fill="#8040a0" stroke="#000" /><path d="M2 12h3v3H2z" fill="#d8c840" stroke="#000" /></Svg>
              <Svg s={16}><path d="M1 2h6M3 5h4M1 8h14M8 1v7M8 3h7M8 6h7M9 13h6" stroke="#000" /><path d="M4 11h4v4H4z" fill="#30b0a0" stroke="#000" /></Svg>
            </div>
            <button aria-label="Manipulator" className="border border-gray-300 border-l-white bg-[#f0f0f4]"><Svg s={20}><path d="M12 10V5" stroke="#10a018" strokeWidth="2" /><path d="M9 6l3-4 3 4z" fill="#10a018" /><path d="M12 11H7" stroke="#1010b0" strokeWidth="2" /><path d="M7 8v6l-5-3z" fill="#1010b0" /><path d="M12 10l5 4" stroke="#c01010" strokeWidth="4" /></Svg></button>
            <button aria-label="Speed" className="border border-gray-300 border-l-white bg-[#f0f0f4]"><Svg s={20}><circle cx="10" cy="10" r="7" stroke="#777" strokeWidth="2" fill="#eee" /><path d="M13 3v7l-5 6a7 7 0 0 1-5-6c0-4 5-8 10-7z" fill="#777" /></Svg></button>
            <button aria-label="Hyperbolic" className="border border-gray-300 border-l-white bg-[#f0f0f4]"><Svg s={20}><path d="M4 17L14 7" stroke="#666" strokeWidth="2" /><path d="M8 5l9-2-2 9z" fill="#666" /></Svg></button>
          </div>
          <nav className="flex h-5 shrink-0 items-center gap-2.5 border-b border-gray-500 bg-white pl-1">
            <button>Channels</button>
            <button>Object</button>
          </nav>
          <div className="mt-[3px] flex min-h-0 flex-1 flex-col border-l border-t border-gray-400 pl-0.5 pt-px font-['Liberation_Sans',sans-serif]">
            <table className="w-[156px] table-fixed border-collapse">
              <colgroup>
                <col className="w-[88px]" />
                <col />
              </colgroup>
              <thead>
                <tr><th colSpan={2} className="h-4 bg-[#cfcfcf] p-0 pl-0.5 text-left text-xs leading-4">duplicatedCurve9 . . .</th></tr>
              </thead>
              <tbody>
                {channels.map(([name, value]) => (
                  <tr key={name}>
                    <th scope="row" className="h-4 p-0 text-right leading-4 font-normal"><label htmlFor={name}>{name}</label></th>
                    <td className="h-4 p-0 pl-1"><input id={name} defaultValue={value} className="block h-4 w-full border-b border-gray-200 bg-white pl-0.5" /></td>
                  </tr>
                ))}
              </tbody>
            </table>
            <div className="w-[156px] border-t border-black text-xs leading-4 font-bold">
              <div className="pl-0.5">SHAPES</div>
              <div className="bg-[#cfcfcf] pl-3.5">duplicatedCurveShape9</div>
              <div className="pl-0.5">OUTPUTS</div>
              <div className="pl-3.5">loft1</div>
            </div>
          </div>
          <button className="h-4 w-[88px] shrink-0 border-b-2 border-t border-gray-400 text-center leading-3">&lt;&lt;</button>
        </aside>
      </main>

      {/* time slider */}
      <div className="flex h-[33px] shrink-0 items-center border-t-2 border-gray-400">
        <Handle className="h-7" />
        <div className="ml-px mr-1 flex h-[31px] w-[714px] min-w-0 overflow-hidden border border-gray-400 bg-[#eaeaef]">
          {Array.from({ length: 13 }, (_, i) => i * 20).map((f) => (
            <div key={f} className="flex w-[59px] shrink-0 flex-col justify-between pb-px text-xs font-bold">
              <span className="pl-0.5 leading-3.5">{f}</span>
              <span className="flex h-3.5 items-end gap-[3px]">
                <span className="h-3.5 w-0.5 bg-black" />
                {f === 0 && <><span className="h-3.5 w-px bg-black" /><span className="leading-3.5">1</span></>}
              </span>
            </div>
          ))}
        </div>
        <NumBox label="Current time" value="1.00" />
        <div className="ml-1 flex gap-0.5">
          <PlayBtn label="Go to start"><path d="M3 6v8" stroke="#333" strokeWidth="2" /><path d="M11 7v6l-5-3zM18 7v6l-5-3z" fill="#444" /></PlayBtn>
          <PlayBtn label="Step back key"><path d="M4 5v10" stroke="#555" strokeWidth="3" /><path d="M17 5v10l-9-5z" fill="#666" /></PlayBtn>
          <PlayBtn label="Step back frame"><path d="M5 2v16" stroke="#b01020" strokeWidth="2" /><path d="M18 5v10l-10-5z" fill="#777" /></PlayBtn>
          <PlayBtn label="Play backwards"><path d="M17 4v12L4 10z" fill="#777" stroke="#333" /></PlayBtn>
          <PlayBtn label="Play forwards"><path d="M4 4v12l12-6z" fill="#777" stroke="#333" /></PlayBtn>
        </div>
      </div>

      {/* range slider */}
      <div className="flex h-[25px] shrink-0 items-start gap-[3px] border-t border-gray-400">
        <Handle className="h-6" />
        <NumBox label="Animation start" value="0.00" />
        <NumBox label="Playback start" value="1.00" />
        <div className="flex h-[22px] min-w-0 flex-1 items-center justify-between border-2 border-gray-400 px-1">
          <button aria-label="Range start" className="ml-1 h-3 w-2.5 border border-white border-r-gray-400" />
          <span className="flex items-center gap-2 text-[13px] text-white">240<button aria-label="Range end" className="h-3 w-2.5 border border-gray-400" /></span>
        </div>
        <NumBox label="Playback end" value="240.00" />
        <NumBox label="Animation end" value="240.00" />
        <button aria-label="Character menu" className="flex h-[22px] w-6 shrink-0 items-center justify-center border border-gray-300"><svg width="16" height="8"><path d="M0 0h16L8 8z" /></svg></button>
        <div className="h-[22px] w-[150px] shrink-0 border-l-2 border-t-2 border-gray-400 pl-0.5 font-['Liberation_Sans',sans-serif]">No Character Set</div>
      </div>

      {/* command line */}
      <div className="flex h-[25px] shrink-0 items-center gap-1 border-t border-gray-400">
        <input aria-label="Command line" className="h-5 min-w-0 flex-1 border-t-2 border-gray-400 bg-white" />
        <output aria-label="Result" className="h-5 min-w-0 flex-1 border-l border-t border-gray-500 bg-[#939ba8]" />
      </div>

      {/* taskbar */}
      <footer className="flex h-[30px] shrink-0 items-center border-t border-[#2a55a8] bg-linear-to-b from-[#7ab8f4] via-[#3f79d2] via-35% to-[#2452b0] text-white">
        <button className="flex h-full w-[100px] shrink-0 items-center gap-1.5 rounded-r-xl bg-linear-to-b from-[#6cc060] via-[#2c9a2c] via-40% to-[#1fae1f] pl-2.5 font-['Noto_Sans_CJK_SC',sans-serif] text-lg italic">
          <Svg s={20}><path d="M3 4c3-2 5-1 7 0L8 10c-2-1-4-1-6 0z" fill="#f05828" /><path d="M11 4c2 1 5 1 7 0l-2 6c-2 1-5 1-7 0z" fill="#88cc30" /><path d="M2 11c2-1 4-1 6 0l-2 6c-2-1-4-1-6 0z" fill="#3878e8" /><path d="M9 11c2 1 5 1 7 0l-2 6c-2 1-5 1-7 0z" fill="#f8c820" /></Svg>
          开始
        </button>
        <div className="flex w-[167px] shrink-0 gap-[7px] pl-2.5">
          {quick.map(([name, art]) => <button key={name} aria-label={name}><Svg s={16}>{art}</Svg></button>)}
        </div>
        <div className="flex min-w-0 flex-1 gap-0.5">
          {tasks.map(([name, art], i) => (
            <button
              key={name}
              className={`flex h-6 w-[83px] shrink-0 items-center gap-0.5 overflow-hidden rounded-sm border border-[#2f62b8] pl-2 text-[11px] ${i === 1 ? 'bg-[#1f4590]' : 'bg-linear-to-b from-[#5592e2] to-[#3a70c8]'}`}
            >
              <span className="flex w-[18px] justify-center">{art}</span>
              <span>{name}</span>
            </button>
          ))}
        </div>
        <div className="flex w-[76px] shrink-0 items-center gap-1 font-['Noto_Sans_CJK_SC',sans-serif]">
          <span className="flex h-4 w-4 flex-col bg-black text-center font-['Liberation_Sans',sans-serif] text-[8px] leading-2 font-bold"><span>MS</span><span className="text-yellow-300">PY</span></span>
          <span className="text-sm">微</span>
          <span className="text-base">英</span>
        </div>
        <div className="flex h-full w-[76px] shrink-0 items-center bg-linear-to-b from-[#d8ecff] via-[#a9cdf6] via-40% to-[#86aee8] text-black">
          <Svg s={18}><circle cx="8" cy="9" r="7" fill="#7fa8e0" stroke="#fff" /><path d="M10 5L6 9l4 4" stroke="#fff" strokeWidth="2" /></Svg>
          <Svg s={18}><path d="M2 2h9v8H2zM6 7h9v7H6z" fill="#303880" stroke="#101840" /><path d="M9 9l7 7M16 9l-7 7" stroke="#e02020" strokeWidth="2" /></Svg>
          <time className="pl-0.5">9:13</time>
        </div>
      </footer>

      {/* minimised child windows */}
      <div className="absolute bottom-[30px] left-0 flex gap-px">
        <MiniWindow title="Multilis..." />
        <MiniWindow title="Outliner" />
      </div>

      {/* marker around the loft button */}
      <div className="pointer-events-none absolute left-[267px] top-[89px] h-[58px] w-[58px] rounded-lg border-2 border-[#d0246c]" />

      {/* torn-off menu */}
      <div role="menu" aria-label="Hide" className="absolute bottom-[30px] right-0 w-[102px] overflow-hidden border-l-2 border-[#3c66c0] bg-white pb-px">
        <div className="mb-[5px] h-[21px] bg-linear-to-b from-[#5a92dc] to-[#2c5ab4] text-xs leading-5 font-bold text-white">Hide</div>
        {[hideTop, hideItems].map((group, i) => (
          <Fragment key={i}>
            {group.map((item) => (
              <button key={item} role="menuitem" className="block h-5 w-full pl-4 text-left">{item}</button>
            ))}
            <hr className={`h-0 border-t border-[#7c8020] ${i === 0 ? 'mb-[5px] mt-1' : 'mt-1'}`} />
          </Fragment>
        ))}
      </div>
    </div>
  );
}
